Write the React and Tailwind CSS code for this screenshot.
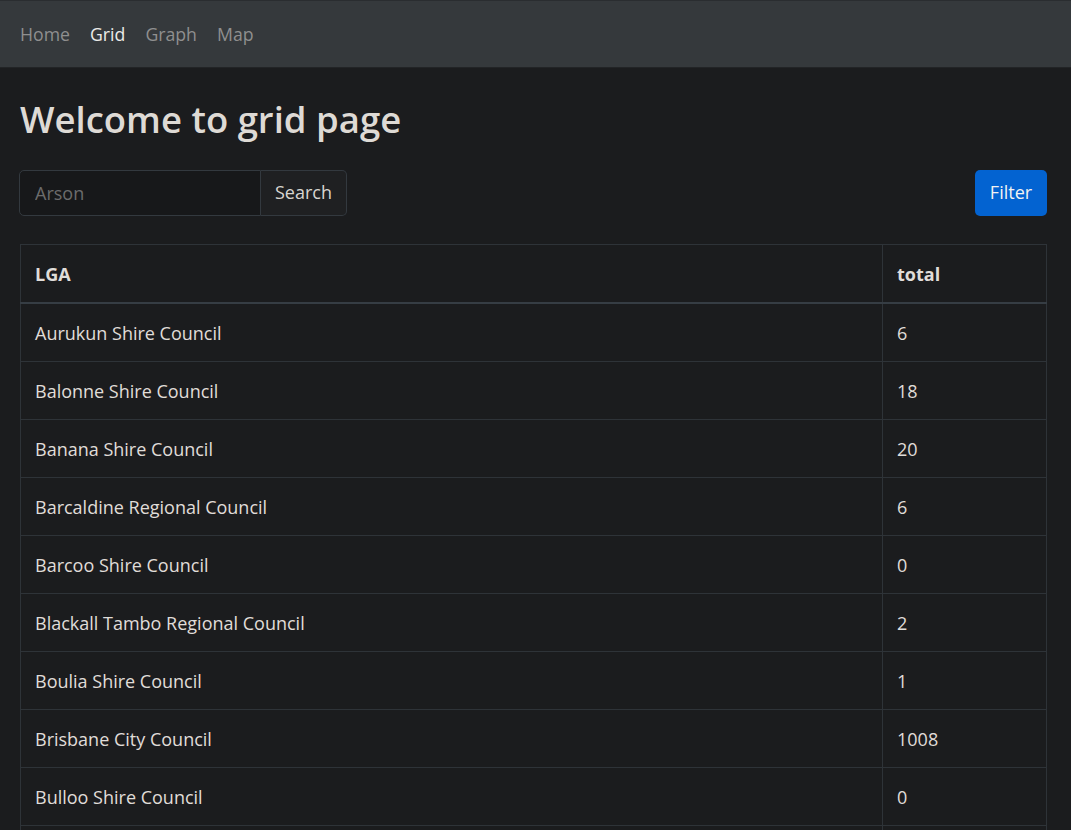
import React from "react";

const rows = [
  ["Aurukun Shire Council", "6"],
  ["Balonne Shire Council", "18"],
  ["Banana Shire Council", "20"],
  ["Barcaldine Regional Council", "6"],
  ["Barcoo Shire Council", "0"],
  ["Blackall Tambo Regional Council", "2"],
  ["Boulia Shire Council", "1"],
  ["Brisbane City Council", "1008"],
  ["Bulloo Shire Council", "0"],
  ["Bundaberg Regional Council", "112"],
  ["Burdekin Shire Council", "14"],
];

export default function App() {
  return (
    <div
      className="min-h-screen bg-[#1b1c1e] text-[#e0ddd9]"
      style={{ fontFamily: '"Open Sans", "Noto Sans", sans-serif' }}
    >
      <nav className="h-[68px] bg-[#35393c] border-t border-[#2a2d30] border-b border-b-[#222426] flex items-center px-5 gap-[20px] text-[17.7px] pt-[1px]">
        <a className="text-[#8f8f8f]">Home</a>
        <a className="text-[#ecebe8]">Grid</a>
        <a className="text-[#8f8f8f]">Graph</a>
        <a className="text-[#8f8f8f]">Map</a>
      </nav>
      <div className="pl-5 pr-6">
        <h1 className="mt-[30px] text-[36.5px] font-semibold leading-[1.2] text-[#dedad5]">
          Welcome to grid page
        </h1>
        <div className="mt-[28px] flex justify-between items-center">
          <div className="flex h-[46px] w-[328px] -ml-px">
            <input
              placeholder="Arson"
              className="w-[242px] h-full bg-[#17181a] border border-[#33393f] rounded-l-[5px] px-[15px] text-[18px] placeholder:text-[#6c6c6c] outline-none"
            />
            <button className="flex-1 h-full bg-[#1f2022] border border-l-0 border-[#33393f] rounded-r-[5px] text-[18px] text-[#d8d5d0]">
              Search
            </button>
          </div>
          <button className="h-[46px] w-[72px] rounded-[5px] bg-[#0363d1] text-[18px] text-[#f2f2f2]">
            Filter
          </button>
        </div>
        <table className="mt-[28px] w-full border-collapse text-[18px]">
          <thead>
            <tr className="h-[59px] border border-[#2e3338] border-b-2 border-b-[#363d44]">
              <th className="text-left font-bold px-[14px] pt-[2px]">LGA</th>
              <th className="text-left font-bold px-[14px] pt-[2px] w-[164px] border-l border-[#2e3338]">
                total
              </th>
            </tr>
          </thead>
          <tbody>
            {rows.map(([name, total]) => (
              <tr key={name} className="h-[58px] border border-[#2e3338]">
                <td className="px-[14px] pt-[2px]">{name}</td>
                <td className="px-[14px] pt-[2px] border-l border-[#2e3338]">{total}</td>
              </tr>
            ))}
          </tbody>
        </table>
      </div>
    </div>
  );
}
